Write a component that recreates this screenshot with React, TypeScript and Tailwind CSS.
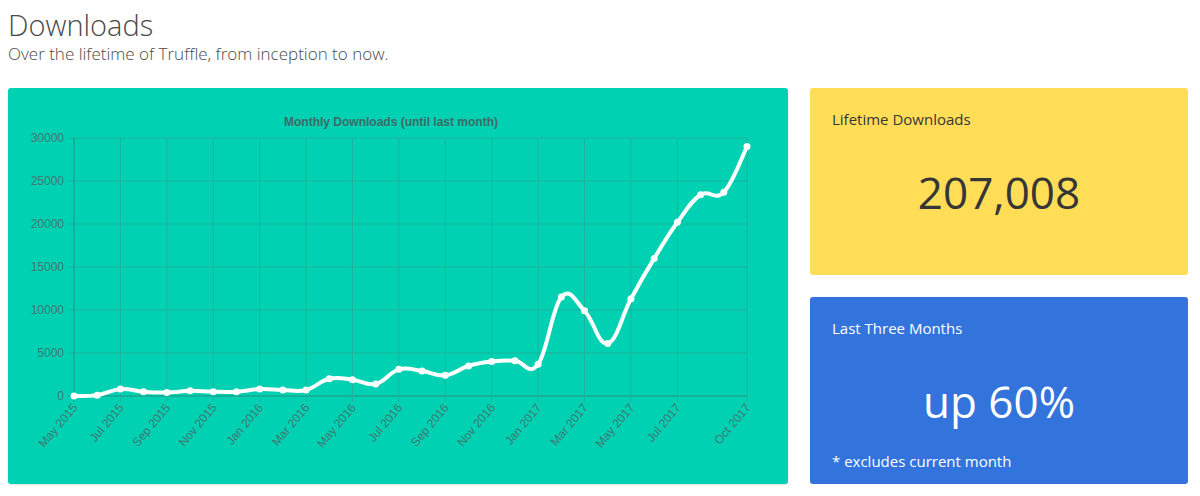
import React from "react";

const data = [0,100,800,500,400,600,500,500,800,700,700,2000,1900,1400,3100,2900,2400,3500,4000,4100,3700,11500,9900,6100,11300,16000,20200,23400,23700,29000];
const labels = ["May 2015","Jul 2015","Sep 2015","Nov 2015","Jan 2016","Mar 2016","May 2016","Jul 2016","Sep 2016","Nov 2016","Jan 2017","Mar 2017","May 2017","Jul 2017","Oct 2017"];
const labelIdx = [0,2,4,6,8,10,12,14,16,18,20,22,24,26,29];
const X0 = 66, X1 = 739, Y0 = 308, Y30 = 50;
const px = (i: number) => X0 + (i * (X1 - X0)) / 29;
const py = (v: number) => Y0 - (v / 30000) * (Y0 - Y30);

function path() {
  const p = data.map((v, i) => [px(i), py(v)]);
  let d = `M${p[0][0]},${p[0][1]}`;
  const t = 0.2;
  for (let i = 0; i < p.length - 1; i++) {
    const a = p[i - 1] || p[i], b = p[i], c = p[i + 1], e = p[i + 2] || c;
    const c1 = [b[0] + (c[0] - a[0]) * t, b[1] + (c[1] - a[1]) * t];
    const c2 = [c[0] - (e[0] - b[0]) * t, c[1] - (e[1] - b[1]) * t];
    d += ` C${c1[0]},${c1[1]} ${c2[0]},${c2[1]} ${c[0]},${c[1]}`;
  }
  return d;
}

export default function App() {
  const font = { fontFamily: '"Open Sans","Noto Sans",sans-serif' };
  return (
    <div className="w-[1200px] h-[496px] bg-white" style={font}>
      <div className="px-[8px] pt-[8px]">
        <h1 className="text-[29px] leading-[34px] font-light text-[#4a4a4a]">Downloads</h1>
        <p className="text-[17px] leading-[24px] font-light text-[#4a4a4a]">Over the lifetime of Truffle, from inception to now.</p>
      </div>
      <div className="flex gap-[22px] px-[8px] mt-[22px]">
        <div className="w-[780px] h-[396px] bg-[#00d1b2] rounded-[3px] shadow-sm">
          <svg width="780" height="396" style={{ fontFamily: '"Liberation Sans",Arial,sans-serif' }}>
            <text x="383" y="38" textAnchor="middle" fontSize="12" fontWeight="bold" fill="#3f6b66">Monthly Downloads (until last month)</text>
            {[0,5000,10000,15000,20000,25000,30000].map((v) => (
              <g key={v}>
                <line x1={X0 - 6} x2={X1} y1={py(v)} y2={py(v)} stroke={v === 0 ? "#2a8f7f" : "#1fb39b"} strokeWidth="1" />
                <text x={X0 - 10} y={py(v) + 4} textAnchor="end" fontSize="12" fill="#3f7a73">{v}</text>
              </g>
            ))}
            {labelIdx.map((i, k) => (
              <g key={i}>
                <line x1={px(i)} x2={px(i)} y1={Y30} y2={Y0 + 6} stroke={k === 0 ? "#2a8f7f" : "#1fb39b"} strokeWidth="1" />
                <text x={px(i) + 4} y={Y0 + 12} textAnchor="end" fontSize="12" fill="#3f7a73" transform={`rotate(-50 ${px(i) + 4} ${Y0 + 12})`}>{labels[k]}</text>
              </g>
            ))}
            <path d={path()} fill="none" stroke="white" strokeWidth="4" strokeLinejoin="round" />
            {data.map((v, i) => (
              <circle key={i} cx={px(i)} cy={py(v)} r="3.5" fill="white" />
            ))}
          </svg>
        </div>
        <div className="w-[378px] flex flex-col gap-[22px]">
          <div className="h-[187px] bg-[#ffdd57] rounded-[3px] px-[22px] pt-[20px] text-[#363636]">
            <div className="text-[15px]">Lifetime Downloads</div>
            <div className="text-center text-[44px] mt-[28px] font-normal">207,008</div>
          </div>
          <div className="h-[187px] bg-[#3273dc] rounded-[3px] px-[22px] pt-[20px] text-white">
            <div className="text-[15px]">Last Three Months</div>
            <div className="text-center text-[44px] mt-[28px]">up 60%</div>
            <div className="text-[15px] mt-[16px]">* excludes current month</div>
          </div>
        </div>
      </div>
    </div>
  );
}
